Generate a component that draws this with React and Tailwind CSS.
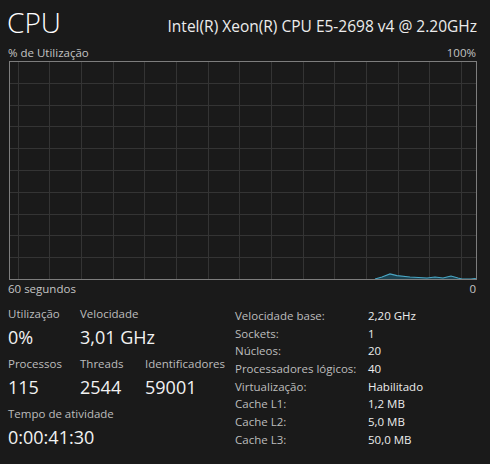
import React from "react";

const FONT = { fontFamily: '"Segoe UI", "Open Sans", "Noto Sans", sans-serif' };

function Chart() {
  const W = 468;
  const H = 219;
  const vx = [];
  for (let k = 0; k < 15; k++) {
    const x = 8.5 + 31.67 * k;
    if (x < W - 1) vx.push(Math.round(x) + 0.5);
  }
  const hy = [];
  for (let k = 1; k < 10; k++) hy.push(Math.round(21.8 * k) + 0.5);
  const pts = [
    [366, 218],
    [373, 216],
    [381, 213],
    [388, 214.7],
    [401, 216],
    [418, 217],
    [426, 216],
    [434, 217],
    [442, 215],
    [449, 217],
    [453, 218],
    [462, 218],
    [466, 217.5],
    [467, 218],
  ];
  const line = pts.map((p) => p.join(",")).join(" ");
  const area = `${pts.map((p) => p.join(",")).join(" ")} 467,218`;
  return (
    <svg width={W} height={H} className="block">
      {vx.map((x) => (
        <line key={"v" + x} x1={x} y1={0} x2={x} y2={H} stroke="#343434" strokeWidth="1" />
      ))}
      {hy.map((y) => (
        <line key={"h" + y} x1={0} y1={y} x2={W} y2={y} stroke="#343434" strokeWidth="1" />
      ))}
      <polygon points={area} fill="#1c4250" />
      <polyline points={line} fill="none" stroke="#4aa6c4" strokeWidth="1.2" />
      <rect x={0.5} y={0.5} width={W - 1} height={H - 1} fill="none" stroke="#7d7d7d" strokeWidth="1" />
    </svg>
  );
}

function Stat({ label, value, className = "" }) {
  return (
    <div className={"flex flex-col " + className}>
      <div className="text-[11.5px] leading-[16px] text-[#bdbdbd]">{label}</div>
      <div className="text-[18px] leading-[24px] text-[#f2f2f2] mt-[3px]">{value}</div>
    </div>
  );
}

const rows = [
  ["Velocidade base:", "2,20 GHz"],
  ["Sockets:", "1"],
  ["Núcleos:", "20"],
  ["Processadores lógicos:", "40"],
  ["Virtualização:", "Habilitado"],
  ["Cache L1:", "1,2 MB"],
  ["Cache L2:", "5,0 MB"],
  ["Cache L3:", "50,0 MB"],
];

export default function App() {
  return (
    <div className="w-[490px] h-[464px] bg-[#1a1a1a] overflow-hidden" style={FONT}>
      <div className="flex items-end justify-between pl-[7px] pr-[13px] h-[40px]">
        <div className="text-[28px] leading-[36px] text-white font-light">CPU</div>
        <div className="text-[15.5px] leading-[22px] text-[#ececec] mb-[3px]">Intel(R) Xeon(R) CPU E5-2698 v4 @ 2.20GHz</div>
      </div>
      <div className="flex justify-between pl-[8px] pr-[14px] h-[21px] items-end text-[11.5px] leading-[16px] text-[#c4c4c4]">
        <span>% de Utilização</span>
        <span>100%</span>
      </div>
      <div className="pl-[9px]">
        <Chart />
      </div>
      <div className="flex justify-between pl-[8px] pr-[14px] h-[18px] items-center text-[11.5px] leading-[16px] text-[#c4c4c4]">
        <span>60 segundos</span>
        <span>0</span>
      </div>
      <div className="flex pt-[8px]">
        <div className="w-[227px] pl-[8px] flex flex-col gap-[7px]">
          <div className="flex">
            <Stat label="Utilização" value="0%" className="w-[72px]" />
            <Stat label="Velocidade" value="3,01 GHz" />
          </div>
          <div className="flex">
            <Stat label="Processos" value="115" className="w-[72px]" />
            <Stat label="Threads" value="2544" className="w-[65px]" />
            <Stat label="Identificadores" value="59001" />
          </div>
          <div className="flex">
            <Stat label="Tempo de atividade" value="0:00:41:30" />
          </div>
        </div>
        <div className="pl-[8px] pt-[1px] flex flex-col">
          {rows.map(([k, v]) => (
            <div key={k} className="flex h-[17.7px] items-center text-[11.5px] leading-[16px]">
              <span className="w-[133px] text-[#bdbdbd]">{k}</span>
              <span className="text-[#ececec]">{v}</span>
            </div>
          ))}
        </div>
      </div>
    </div>
  );
}
